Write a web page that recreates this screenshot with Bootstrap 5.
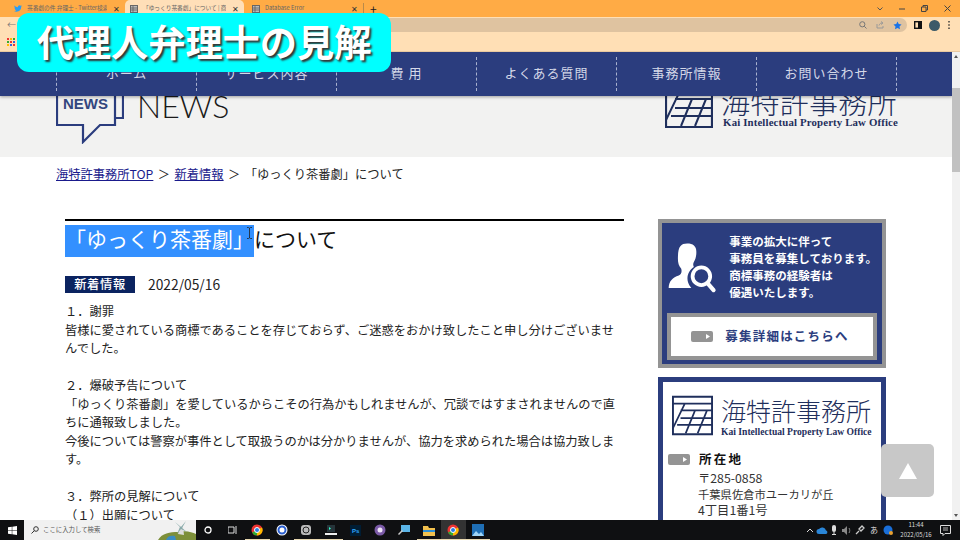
<!DOCTYPE html>
<html lang="ja">
<head>
<meta charset="utf-8">
<title>「ゆっくり茶番劇」について</title>
<link rel="stylesheet" href="https://cdn.jsdelivr.net/npm/bootstrap@5.3.0/dist/css/bootstrap.min.css">
<style>
html,body{width:960px;height:540px;overflow:hidden;background:#fff}
body{font-family:"Noto Sans CJK JP","Liberation Sans",sans-serif;font-size:12.25px;color:#222}
.app-shell{width:960px;height:540px;position:relative}
.tab-strip{height:17px;background:#ffab45;padding-left:6px;font-size:5.7px;color:#666}
.chrome-tab{width:119px;height:17px;padding:0 5px 0 8px;overflow:hidden;white-space:nowrap;border-radius:5px 5px 0 0}
.chrome-tab.on-tab{background:#ffdfb8;padding-left:5px}
.tab-title{flex:1;overflow:hidden;white-space:nowrap;padding-left:1px}
.tab-x{font-size:8px;color:#333;margin-left:2px;line-height:1}
.tab-plus{font-size:12px;color:#222;border-left:1px solid #b98a4a;padding-left:6px;line-height:11px}
.win-btns{margin-left:auto;gap:16px;padding-right:9px;color:#444;font-size:8px}
.tool-row{height:16px;background:#ffdfb5;padding:1px 10px 1px 7px;color:#7b7b7b;font-size:9px}
.addr-bar{flex:1;height:14px;background:#dfc3a0;border-radius:7px;margin-left:34px;gap:9px;padding-right:5px;margin-right:7px}
.avatar-dot{width:11px;height:11px;border-radius:50%;background:#3c5a68;margin:0 8px 0 7px}
.mark-row{height:19px;background:#ffdfb5;padding-left:7px;border-bottom:1px solid #e9c9a0}
.mid-area{height:468px}
.site-col{flex:1;min-width:0;overflow:hidden;position:relative}
.scroll-rail{width:8px;background:#f1f1f1;position:relative}
.scroll-thumb{position:absolute;left:0;right:0;top:36px;height:84px;background:#c1c1c1}
.scroll-arrow-top,.scroll-arrow-bot{position:absolute;left:2px;width:0;height:0;border-left:2px solid transparent;border-right:2px solid transparent}
.scroll-arrow-top{top:3px;border-bottom:3px solid #555}
.scroll-arrow-bot{bottom:3px;border-top:3px solid #555}
.site-nav{height:44px;background:#2b3d7e;padding:5px 0 5px 56px;position:relative;z-index:2;box-shadow:0 1px 3px rgba(0,0,0,.35)}
.site-nav-item{width:140px;height:34px;border-left:1px dashed #aab2cf;color:#d4d8e8;font-size:13px;letter-spacing:1px;padding-bottom:3px}
.site-nav-item:last-child{width:0;padding:0}
.hero-band{height:61px;background:#f2f2f1;padding:0 54px 13px 56px;overflow:hidden}
.big-news{font-family:Lato,"Liberation Sans",sans-serif;font-weight:300;font-size:32px;line-height:32px;color:#1a1a1a;margin-left:13px;margin-bottom:22px}
.logo-head{margin-bottom:16px}
.logo-head-name{font-size:29px;line-height:29px;color:#1f2f5c;letter-spacing:.3px;white-space:nowrap;margin-bottom:1px;font-weight:300}
.logo-head-en{font-family:"Liberation Serif",serif;font-weight:700;font-size:10.8px;line-height:11px;color:#1f2f5c;white-space:nowrap;letter-spacing:.15px;margin-left:2px}
.crumb-row{padding:8px 0 0 56px;line-height:18px;white-space:nowrap}
.crumb-row a{color:#1a1a8c}
.crumb-sep{margin:0 4.5px}
.page-cols{padding:36px 0 0 65px}
.article-col{width:559px;flex:none}
.article-head{border-top:2px solid #000;font-size:21px;line-height:26px;padding-top:4px;color:#111;position:relative;height:38px;white-space:nowrap}
.sel-part{background:#3390ff;color:#fff;display:inline-block;height:32px}
.ibeam{position:absolute;left:182px;top:6px}
.meta-row{margin-top:18px;height:18px;font-size:13.8px}
.news-tag{width:70px;height:17px;background:#0b2360;color:#fff;font-size:12.3px;font-weight:500;letter-spacing:.6px;line-height:17px;text-align:center;margin-right:13px}
.body-copy{margin-top:9px;font-size:12.25px;line-height:18.5px;color:#222}
.side-col{width:228px;margin-left:34px;flex:none}
.promo-box{height:149px;background:#2b3d7e;border:4px solid #949494;padding:10px 5px 5px}
.promo-text{color:#fff;font-weight:700;font-size:11.5px;line-height:17px;white-space:nowrap;margin-left:6px;padding-left:6px}
.promo-link{height:47px;border:4px solid #949494;background:#fff;color:#2b3d7e;font-weight:700;font-size:12.5px;letter-spacing:1.2px;gap:12px;margin-top:12px;padding-right:4px}
.office-box{margin-top:9px;height:200px;border:5px solid #2b3d7e;border-bottom:0;background:#fff;padding:13px 5px 0}
.office-mark{margin-left:4px;flex:none}
.office-name{font-size:25px;line-height:25px;color:#1f2f5c;white-space:nowrap;font-weight:300;margin:3px 0 0 8px}
.office-en{font-family:"Liberation Serif",serif;font-weight:700;font-size:9.6px;line-height:10px;color:#1f2f5c;margin-left:8px;white-space:nowrap;margin-top:4px}
.office-label{font-weight:700;font-size:12.5px;letter-spacing:2.2px;color:#111;gap:9px;margin-top:13px;line-height:18px}
.office-addr{margin:2px 0 0 30px;line-height:16.2px;color:#333;white-space:nowrap;font-size:11.3px}
.office-zip{font-size:12.3px}
.banner-title{position:absolute;left:17px;top:13px;width:374px;height:59px;background:#0ff;border-radius:12px;z-index:5;color:#fff;font-weight:700;font-size:37.2px;text-shadow:2px 2px 2px #333;line-height:56px;text-align:center;white-space:nowrap}
.top-jump{position:absolute;left:881px;top:444px;width:53px;height:53px;background:#c8c8c8;border-radius:5px;z-index:4}
.top-jump i{border-left:9.5px solid transparent;border-right:9.5px solid transparent;border-bottom:16px solid #fff;display:block}
.task-bar{height:20px;background:#0f1012;position:relative;z-index:3}
.task-start{width:24px}
.task-search{width:172px;height:20px;background:#f1f1f1;color:#555;font-size:6.4px;padding-left:7px;gap:4px;overflow:hidden}
.task-icon{width:24.5px;height:20px;flex:none}
.task-icon.running{box-shadow:inset 0 -1px 0 #e8d8b0}
.task-icon.active-app{background:#333}
.tray-zone{margin-left:auto;gap:2px;color:#ddd;font-size:8px;padding-right:9px}
.tray-slot{width:12px}
.tray-tight{margin-right:-2px}
.clock-box{font-size:6px;line-height:10px;text-align:center;color:#ddd;width:38px;margin:0 3px 0 1px}
</style>
</head>
<body>
<div class="app-shell d-flex flex-column">
  <div class="tab-strip d-flex align-items-center">
    <div class="chrome-tab d-flex align-items-center gap-1">
      <svg width="8" height="7" viewBox="0 0 24 20"><path fill="#2a9df4" d="M24 2.500c-.9.4-1.800.7-2.800.8 1-.6 1.800-1.600 2.200-2.700-1 .6-2 1-3.100 1.200C19.300.7 18 0 16.600 0c-2.700 0-4.900 2.200-4.900 4.900 0 .4 0 .8.100 1.100C7.700 5.800 4.100 3.900 1.700.9 1.200 1.600 1 2.500 1 3.400c0 1.700.9 3.200 2.200 4.100-.8 0-1.600-.2-2.200-.6v.1c0 2.400 1.700 4.400 3.900 4.800-.7.200-1.500.2-2.200.1.600 2 2.400 3.400 4.600 3.400-1.700 1.300-3.800 2.100-6.100 2.100-.4 0-.8 0-1.200-.1C2.200 18.900 4.800 19.700 7.500 19.700c9.100 0 14-7.500 14-14v-.6c1-.7 1.800-1.600 2.500-2.600z"/></svg>
      <span class="tab-title">茶番劇の件 弁理士 - Twitter検索</span><span class="tab-x">✕</span>
    </div>
    <div class="chrome-tab on-tab d-flex align-items-center gap-1">
      <svg width="8" height="8" viewBox="0 0 8 8"><rect x=".5" y=".5" width="7" height="7" fill="#bbb" stroke="#666"/><path d="M1 3h6M1 5h6M3 1v6" stroke="#555" stroke-width=".7"/></svg>
      <span class="tab-title">「ゆっくり茶番劇」について | 商標登</span><span class="tab-x">✕</span>
    </div>
    <div class="chrome-tab d-flex align-items-center gap-1">
      <svg width="8" height="8" viewBox="0 0 8 8"><rect x=".5" y=".5" width="7" height="7" fill="#bbb" stroke="#666"/><path d="M1 3h6M1 5h6M3 1v6" stroke="#555" stroke-width=".7"/></svg>
      <span class="tab-title">Database Error</span><span class="tab-x">✕</span>
    </div>
    <span class="tab-plus">+</span>
    <div class="win-btns d-flex align-items-center">
      <svg width="6" height="4" viewBox="0 0 6 4"><path d="M.5.500l2.500 2.500L5.500.500" fill="none" stroke="#555"/></svg>
      <svg width="6" height="2" viewBox="0 0 6 2"><path d="M0 1h6" stroke="#444"/></svg>
      <svg width="7" height="7" viewBox="0 0 7 7"><path d="M.5 2h4.500v4.500H.5zM2 2V.5h4.500V5H5" fill="none" stroke="#444"/></svg>
      <svg width="7" height="7" viewBox="0 0 7 7"><path d="M.5.500l6 6M6.500.500l-6 6" stroke="#444"/></svg>
    </div>
  </div>
  <div class="tool-row d-flex align-items-center">
    <span>←</span>
    <div class="addr-bar d-flex align-items-center justify-content-end">
      <svg width="8" height="8" viewBox="0 0 8 8"><circle cx="3.300" cy="3.300" r="2.600" fill="none" stroke="#777"/><path d="M5.300 5.300L7.500 7.500" stroke="#777"/></svg>
      <svg width="8" height="8" viewBox="0 0 8 8"><path d="M1 3v4h6V5M3 4.500C3.500 2.500 5 2 6 2M5 .5L7 2 5 3.500" fill="none" stroke="#999"/></svg>
      <svg width="9" height="9" viewBox="0 0 10 10"><path fill="#1a73e8" d="M5 .5l1.400 2.900 3.100.4-2.300 2.200.6 3.200L5 7.700 2.200 9.200l.6-3.200L.5 3.800l3.100-.4z"/></svg>
    </div>
    <svg width="8" height="8" viewBox="0 0 8 8"><rect x=".7" y=".7" width="6.600" height="6.600" fill="none" stroke="#111" stroke-width="1.400"/><rect x="4" y="1" width="3" height="6" fill="#111"/></svg>
    <span class="avatar-dot"></span>
    <svg width="2" height="8" viewBox="0 0 2 8"><path d="M1 0v1.500M1 3.200v1.500M1 6.400v1.500" stroke="#333" stroke-width="1.400"/></svg>
  </div>
  <div class="mark-row d-flex align-items-center">
    <svg width="8" height="8" viewBox="0 0 8 8"><g><rect width="2" height="2" fill="#e33"/><rect x="3" width="2" height="2" fill="#fb0"/><rect x="6" width="2" height="2" fill="#3a3"/><rect y="3" width="2" height="2" fill="#3a3"/><rect x="3" y="3" width="2" height="2" fill="#e33"/><rect x="6" y="3" width="2" height="2" fill="#36d"/><rect y="6" width="2" height="2" fill="#fb0"/><rect x="3" y="6" width="2" height="2" fill="#36d"/><rect x="6" y="6" width="2" height="2" fill="#e33"/></g></svg>
  </div>
  <div class="mid-area d-flex">
    <div class="site-col">
      <nav class="site-nav d-flex">
        <div class="site-nav-item d-flex align-items-center justify-content-center">ホーム</div>
        <div class="site-nav-item d-flex align-items-center justify-content-center">サービス内容</div>
        <div class="site-nav-item d-flex align-items-center justify-content-center">費 用</div>
        <div class="site-nav-item d-flex align-items-center justify-content-center">よくある質問</div>
        <div class="site-nav-item d-flex align-items-center justify-content-center">事務所情報</div>
        <div class="site-nav-item d-flex align-items-center justify-content-center">お問い合わせ</div>
        <div class="site-nav-item"></div>
      </nav>
      <header class="hero-band d-flex align-items-end">
        <svg width="68" height="60" viewBox="0 0 68 60">
          <path d="M1 1H59V41H44L27 58V41H1z" fill="#f2f2f1" stroke="#2b3d7e" stroke-width="2.200"/>
          <path d="M59 1H67V34H59" fill="none" stroke="#2b3d7e" stroke-width="2.200"/>
          <text x="7" y="25" font-family="Liberation Sans" font-weight="700" font-size="15" fill="#33477f">NEWS</text>
        </svg>
        <div class="big-news">NEWS</div>
        <div class="logo-head ms-auto d-flex align-items-end gap-2">
          <svg width="48" height="46" viewBox="0 0 48 46"><path d="M1 1h46v44H1z" fill="none" stroke="#1f2f5c" stroke-width="2.200"/><path d="M1 9h46M10 17h37M10 26h37M6 34h41M15 9L1 38M27 17L16 44M41 17L30 44" fill="none" stroke="#1f2f5c" stroke-width="2"/></svg>
          <div>
            <div class="logo-head-name">海特許事務所</div>
            <div class="logo-head-en">Kai Intellectual Property Law Office</div>
          </div>
        </div>
      </header>
      <div class="crumb-row"><a href="#">海特許事務所TOP</a><span class="crumb-sep">＞</span><a href="#">新着情報</a><span class="crumb-sep">＞</span>「ゆっくり茶番劇」について</div>
      <div class="page-cols d-flex">
        <main class="article-col">
          <h1 class="article-head m-0 fw-normal"><span class="sel-part">「ゆっくり茶番劇」</span>について<svg class="ibeam" width="5" height="12" viewBox="0 0 5 12"><path d="M0 .5h1.500L2.500 1.200 3.500.5H5M2.500 1v10M0 11.500h1.500l1-.7 1 .7H5" fill="none" stroke="#222" stroke-width=".8"/></svg></h1>
          <div class="meta-row d-flex align-items-center"><span class="news-tag">新着情報</span><span>2022/05/16</span></div>
          <div class="body-copy">
            １．謝罪<br>
            皆様に愛されている商標であることを存じておらず、ご迷惑をおかけ致したこと申し分けございませんでした。<br><br>
            ２．爆破予告について<br>
            「ゆっくり茶番劇」を愛しているからこその行為かもしれませんが、冗談ではすまされませんので直ちに通報致しました。<br>
            今後については警察が事件として取扱うのかは分かりませんが、協力を求められた場合は協力致します。<br><br>
            ３．弊所の見解について<br>
            （１）出願について
          </div>
        </main>
        <aside class="side-col">
          <div class="promo-box">
            <div class="d-flex">
              <svg width="60" height="68" viewBox="0 0 60 68">
                <path fill="#fff" d="M24 6c7 0 11 3 11 10 0 5-1 9-3 12-1 2-1 4 0 6-6 4-9 11-7 18 1 3 2 5 4 7H2c0-8 5-13 12-15 3-1 4-4 3-8-3-3-4-7-4-12C13 10 16 6 24 6z"/>
                <circle cx="41" cy="45" r="10.500" fill="none" stroke="#fff" stroke-width="4.500"/>
                <path d="M48.500 53.500l7 8" stroke="#fff" stroke-width="5" stroke-linecap="round"/>
              </svg>
              <div class="promo-text">事業の拡大に伴って<br>事務員を募集しております。<br>商標事務の経験者は<br>優遇いたします。</div>
            </div>
            <div class="promo-link d-flex align-items-center justify-content-center">
              <svg width="22" height="11" viewBox="0 0 22 11"><rect width="22" height="11" rx="2" fill="#949494"/><path d="M15 3l4 2.500-4 2.500z" fill="#fff"/></svg>
              <span>募集詳細はこちらへ</span>
            </div>
          </div>
          <div class="office-box">
            <div class="d-flex">
              <svg class="office-mark" width="41" height="41" viewBox="0 0 48 46"><path d="M1 1h46v44H1z" fill="none" stroke="#1f2f5c" stroke-width="2.500"/><path d="M1 9h46M10 17h37M10 26h37M6 34h41M15 9L1 38M27 17L16 44M41 17L30 44" fill="none" stroke="#1f2f5c" stroke-width="2"/></svg>
              <div>
                <div class="office-name">海特許事務所</div>
                <div class="office-en">Kai Intellectual Property Law Office</div>
              </div>
            </div>
            <div class="office-label d-flex align-items-center">
              <svg width="22" height="11" viewBox="0 0 22 11"><rect width="22" height="11" rx="2" fill="#949494"/><path d="M15 3l4 2.500-4 2.500z" fill="#fff"/></svg>
              <span>所在地</span>
            </div>
            <div class="office-addr"><span class="office-zip">〒285-0858</span><br>千葉県佐倉市ユーカリが丘<br><span class="office-zip">4丁目1番1号</span></div>
          </div>
        </aside>
      </div>
    </div>
    <div class="scroll-rail"><span class="scroll-arrow-top"></span><span class="scroll-thumb"></span><span class="scroll-arrow-bot"></span></div>
  </div>
  <footer class="task-bar d-flex align-items-center">
    <div class="task-start d-flex justify-content-center">
      <svg width="9" height="9" viewBox="0 0 9 9"><path fill="#fff" d="M0 1.300L3.800.8v3.400H0zM4.300.7L9 0v4.200H4.300zM0 4.800h3.800v3.400L0 7.700zM4.300 4.800H9V9l-4.700-.7z"/></svg>
    </div>
    <div class="task-search d-flex align-items-center">
      <svg width="8" height="8" viewBox="0 0 8 8"><circle cx="5" cy="3" r="2.300" fill="none" stroke="#333"/><path d="M3.300 4.700L.5 7.500" stroke="#333"/></svg>
      <span>ここに入力して検索</span>
      <svg class="ms-auto" width="38" height="20" viewBox="0 0 38 20"><path d="M0 20c4-7 12-8 20-8 8-2 14 0 18 2v6z" fill="#7d8f3a"/><path d="M8 20c1-4 5-5 9-4l1 4z" fill="#3a8cc2"/><path d="M20 14l2-8 3 1 1 8z" fill="#ddd"/><path d="M17 2l6 5 5-6-4 7 5 4-6-3-4 5 3-7z" fill="#8aa"/></svg>
    </div>
    <div class="task-icon d-flex align-items-center justify-content-center"><svg width="8" height="8"><circle cx="4" cy="4" r="3" fill="none" stroke="#fff" stroke-width="1.300"/></svg></div>
    <div class="task-icon d-flex align-items-center justify-content-center"><svg width="9" height="8"><path d="M0 1h6v6H0z" fill="none" stroke="#ddd"/><path d="M8 0v8" stroke="#ddd"/></svg></div>
    <div class="task-icon running d-flex align-items-center justify-content-center"><svg width="12" height="12" viewBox="0 0 12 12"><circle cx="6" cy="6" r="5.500" fill="#e33"/><path d="M6 6L1 8.500A5.500 5.500 0 0 0 6 11.500z" fill="#3a3"/><path d="M6 6l5-2.500a5.500 5.500 0 0 1-5 8z" fill="#fb0"/><circle cx="6" cy="6" r="2.500" fill="#2a7de1" stroke="#fff"/></svg></div>
    <div class="task-icon d-flex align-items-center justify-content-center"><svg width="12" height="12"><circle cx="6" cy="6" r="5.500" fill="#fff"/><circle cx="6" cy="6" r="3.500" fill="none" stroke="#2a5fd0" stroke-width="2"/></svg></div>
    <div class="task-icon running d-flex align-items-center justify-content-center"><svg width="12" height="12"><rect x="1" y="1" width="10" height="10" rx="3" fill="#bbb"/><circle cx="6" cy="6" r="3" fill="none" stroke="#222"/></svg></div>
    <div class="task-icon running d-flex align-items-center justify-content-center"><svg width="12" height="12"><rect x="2" y="1" width="8" height="7" fill="#26343a"/><path d="M4 3l2 1.500L4 6z" fill="#3fc"/><rect x="0" y="9" width="12" height="2" fill="#eee"/></svg></div>
    <div class="task-icon d-flex align-items-center justify-content-center"><svg width="11" height="11"><rect width="11" height="11" fill="#001d34"/><text x="2" y="8" font-family="Liberation Sans" font-size="6" font-weight="700" fill="#31a8ff">Ps</text></svg></div>
    <div class="task-icon d-flex align-items-center justify-content-center"><svg width="12" height="12"><circle cx="6" cy="6" r="5.500" fill="#7a5aa6"/><circle cx="6" cy="6" r="2.500" fill="#efe6f7"/></svg></div>
    <div class="task-icon d-flex align-items-center justify-content-center"><svg width="12" height="12"><rect x="3" y="1" width="9" height="7" fill="#5bb5e8"/><path d="M0 10l4-4 1 1-4 4z" fill="#ccc"/></svg></div>
    <div class="task-icon running d-flex align-items-center justify-content-center"><svg width="12" height="11"><path d="M0 1h5l1 2h6v8H0z" fill="#f2c14e"/><rect x="0" y="5" width="12" height="2" fill="#2a8fd8"/></svg></div>
    <div class="task-icon active-app running d-flex align-items-center justify-content-center"><svg width="12" height="12" viewBox="0 0 12 12"><circle cx="6" cy="6" r="5.500" fill="#e33"/><path d="M6 6L1 8.500A5.500 5.500 0 0 0 6 11.500z" fill="#3a3"/><path d="M6 6l5-2.500a5.500 5.500 0 0 1-5 8z" fill="#fb0"/><circle cx="6" cy="6" r="2.500" fill="#2a7de1" stroke="#fff"/></svg></div>
    <div class="task-icon running d-flex align-items-center justify-content-center"><svg width="12" height="12"><rect width="12" height="12" fill="#1f6fb5"/><path d="M0 12l4-5 3 3 2-2 3 4z" fill="#9fd4f5"/></svg></div>
    <div class="tray-zone d-flex align-items-center">
      <svg class="tray-slot tray-tight" width="12" height="6" viewBox="0 0 12 6"><path d="M3 5l3-3 3 3" fill="none" stroke="#ddd"/></svg>
      <svg class="tray-slot tray-tight" width="12" height="7" viewBox="0 0 12 7"><path d="M3 7a2.500 2.500 0 0 1 0-5 4 4 0 0 1 7 1.500A1.800 1.800 0 0 1 10 7z" fill="#2a86d8"/></svg>
      <svg class="tray-slot tray-tight" width="12" height="10" viewBox="0 0 12 10"><rect x="4" y="0" width="4" height="7" rx="2" fill="#ddd"/><path d="M6 7v3M4 9.500h4" stroke="#ddd"/></svg>
      <svg class="tray-slot" width="12" height="9" viewBox="0 0 12 9"><path d="M2 3h2l3-3v9L4 6H2z" fill="#888"/><path d="M9 2c1 1.500 1 3.500 0 5" fill="none" stroke="#888"/></svg>
      <svg class="tray-slot" width="12" height="10" viewBox="0 0 12 10"><path d="M2 9l3-3M5 4l3-3 2 2-3 3z" fill="none" stroke="#ccc" stroke-width="1.300"/></svg>
      <span class="tray-slot text-center">あ</span>
      <svg class="tray-slot" width="12" height="10" viewBox="0 0 12 10"><circle cx="6" cy="5" r="4.500" fill="#1a6fd8"/><circle cx="9" cy="8" r="2" fill="#e8a030"/></svg>
      <div class="clock-box">11:44<br>2022/05/16</div>
      <svg width="11" height="11" viewBox="0 0 11 11"><path d="M.5.500h10v8H5l-2 2v-2H.5z" fill="none" stroke="#ddd"/><path d="M3 3h5M3 5h5" stroke="#ddd" stroke-width=".8"/></svg>
    </div>
  </footer>
  <div class="banner-title">代理人弁理士の見解</div>
  <a class="top-jump d-flex align-items-center justify-content-center" href="#" aria-label="ページ上部へ"><i></i></a>
</div>
<script src="https://cdn.jsdelivr.net/npm/bootstrap@5.3.0/dist/js/bootstrap.bundle.min.js"></script>
</body>
</html>
